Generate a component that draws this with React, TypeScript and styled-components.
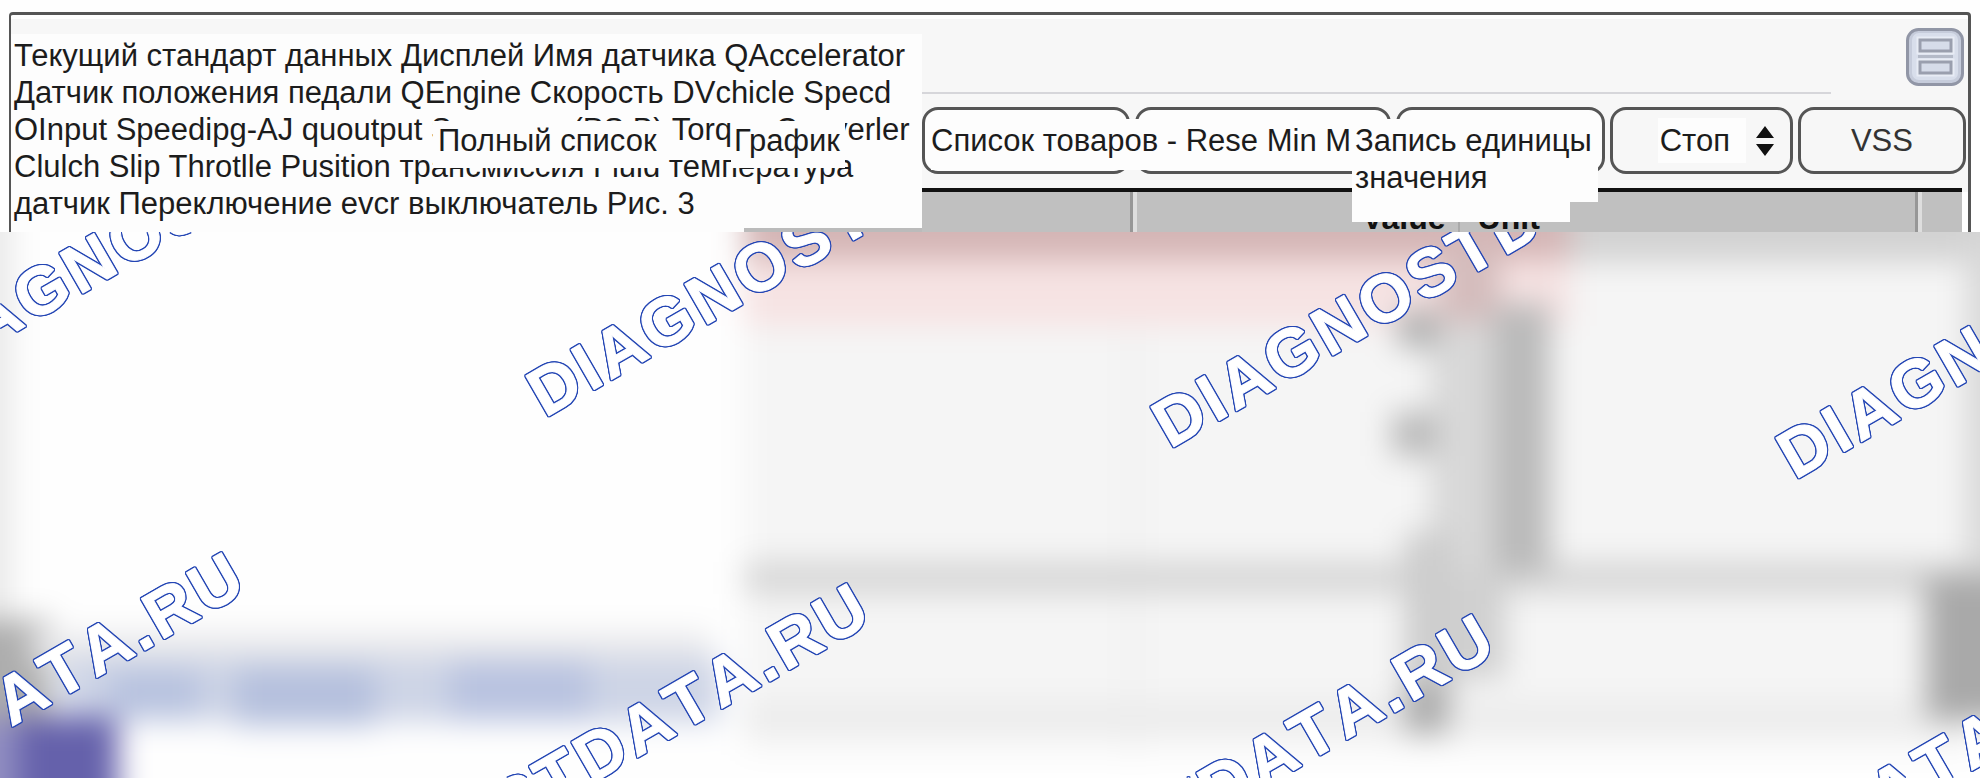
import React from "react";
import styled, { createGlobalStyle } from "styled-components";

const GlobalStyle = createGlobalStyle`
  *, *::before, *::after { box-sizing: border-box; }
  body {
    margin: 0;
    background: #fefefe;
    color: #1c1c1c;
    font-family: "Liberation Sans", Arial, sans-serif;
    font-size: 31px;
    line-height: 37px;
  }
`;

const Page = styled.main`
  display: flex;
  flex-direction: column;
  min-height: 100vh;
  overflow: hidden;
`;

const Frame = styled.section`
  display: flex;
  margin: 12px 9px 0;
  border: solid #555;
  border-width: 3px 3px 0 2px;
  border-radius: 4px 4px 0 0;
  background: #f7f7f7;
  box-shadow: inset 0 4px 0 #fff;
`;

const NoteColumn = styled.div`
  flex: none;
  width: 911px;
  padding-top: 19px;
`;

const Note = styled.div`
  position: relative;
  padding: 3px 0 6px 3px;
  background: #fdfdfd;
  white-space: nowrap;
`;

const NoteText = styled.p`
  margin: 0;
`;

const NoteFoot = styled.div`
  height: 4px;
  padding-left: 733px;
  background: #fdfdfd;
`;

const FootShade = styled.div`
  height: 100%;
  background: #bbb;
`;

const Caption = styled.span<{ $left: number; $top: number; $width: number; $height: number; $pad: string }>`
  position: absolute;
  left: ${(p) => p.$left}px;
  top: ${(p) => p.$top}px;
  width: ${(p) => p.$width}px;
  height: ${(p) => p.$height}px;
  padding: ${(p) => p.$pad};
  background: #fdfdfd;
  white-space: nowrap;
`;

const UnitCaption = styled(Caption)`
  z-index: 1;
  &::after {
    content: "";
    position: absolute;
    left: 0;
    top: 100%;
    width: 218px;
    height: 20px;
    background: #fdfdfd;
  }
`;

const Panel = styled.div`
  flex: 1;
  min-width: 0;
`;

const PanelHeader = styled.header`
  display: flex;
  justify-content: flex-end;
  padding: 13px 4px 6px 0;
`;

const MenuButton = styled.button`
  width: 58px;
  height: 58px;
  padding: 0;
  border: 0;
  background: none;
  svg { display: block; }
`;

const Divider = styled.hr`
  height: 2px;
  margin: 0 137px 13px 0;
  border: 0;
  background: #d6d6da;
`;

const Toolbar = styled.div`
  position: relative;
  display: grid;
  grid-template-columns: 208fr 256fr 208fr 183fr 168fr;
  gap: 5px;
  height: 67px;
  margin-right: 2px;
`;

const ToolButton = styled.button<{ $plain?: boolean }>`
  border: 3px solid #555;
  border-radius: 16px;
  background: ${(p) => (p.$plain ? "#f7f7f7" : "#fdfdfd")};
  color: #333;
  font: inherit;
`;

const SelectBox = styled.div`
  display: flex;
  align-items: center;
  justify-content: space-between;
  padding: 0 16px 0 45px;
  border: 3px solid #555;
  border-radius: 16px;
  background: #f7f7f7;
`;

const ModeSelect = styled.select`
  width: 88px;
  height: 45px;
  padding: 0 0 0 2px;
  border: 0;
  appearance: none;
  background: #fdfdfd;
  color: #1c1c1c;
  font: inherit;
`;

const Rule = styled.div`
  height: 4px;
  margin: 14px 6px 0 0;
  background: #111;
`;

const TableWrap = styled.div`
  padding-right: 6px;
  background: #fff;
`;

const HeadTable = styled.table`
  width: 100%;
  height: 40px;
  border-collapse: collapse;
  table-layout: fixed;
  background: #c0c0c0;
`;

const HeadCell = styled.th<{ $edge: string; $align?: string }>`
  height: 40px;
  padding: 12px 12px 0 20px;
  box-shadow: ${(p) => p.$edge};
  color: #111;
  font-size: 32px;
  line-height: 28px;
  text-align: ${(p) => p.$align ?? "left"};
  vertical-align: top;
`;

const Preview = styled.section`
  position: relative;
  flex: 1;
  min-height: 546px;
  overflow: hidden;
`;

const Backdrop = styled.svg`
  display: block;
  position: absolute;
  inset: 0;
  width: 100%;
  height: 100%;
`;

const Watermark = styled.svg`
  position: absolute;
  left: 0;
  top: 0;
  width: 100%;
  height: 100%;
  filter: drop-shadow(1px 0 0 #2446b4) drop-shadow(-1px 0 0 #2446b4) drop-shadow(0 1px 0 #2446b4)
    drop-shadow(0 -1px 0 #2446b4);
  text {
    fill: #fff;
    stroke: #fff;
    stroke-width: 1px;
    stroke-linejoin: round;
    font: bold 67px "Liberation Sans", Arial, sans-serif;
    font-kerning: none;
    letter-spacing: 4px;
  }
`;

const wide = "inset 3px 0 0 #979797, inset 7px 0 0 #dedede";
const thin = "inset 2px 0 0 #aaa";

const marks = [
  { x: -80, y: 155 },
  { x: 545, y: 186 },
  { x: 1170, y: 217 },
  { x: 1795, y: 248 },
  { x: -368, y: 714 },
  { x: 257, y: 745 },
  { x: 882, y: 776 },
  { x: 1507, y: 807 },
];

export default function App() {
  return (
    <Page>
      <GlobalStyle />
      <Frame>
        <NoteColumn>
          <Note>
            <NoteText>
              Текущий стандарт данных Дисплей Имя датчика QAccelerator
              <br />
              Датчик положения педали QEngine Скорость DVchicle Specd
              <br />
              OInput Speedipg-AJ quoutput Sensoren (PS B) Torque Converler
              <br />
              Clulch Slip Throtlle Pusition трансмиссия Fluid температура
              <br />
              датчик Переключение evcr выключатель Рис. 3
            </NoteText>
            <Caption $left={422} $top={87} $width={231} $height={47} $pad="1px 0 0 5px">
              Полный список
            </Caption>
            <Caption $left={720} $top={87} $width={114} $height={47} $pad="1px 0 0 3px">
              График
            </Caption>
          </Note>
          <NoteFoot>
            <FootShade />
          </NoteFoot>
        </NoteColumn>
        <Panel>
          <PanelHeader>
            <MenuButton aria-label="Меню">
              <svg width="58" height="58" viewBox="0 0 58 58">
                <rect x="1.5" y="1.5" width="55" height="55" rx="11" fill="#c6ccdb" stroke="#9196a6" strokeWidth="3" />
                <rect x="6" y="5" width="46" height="47" rx="7" fill="#d8deeb" />
                <g fill="#dde2ed" stroke="#e8ecf5" strokeWidth="7">
                  <rect x="14" y="12" width="31" height="11" />
                  <rect x="14" y="34" width="31" height="11" />
                </g>
                <g fill="#d6dce9" stroke="#9a9fae" strokeWidth="3">
                  <rect x="14" y="12" width="31" height="11" />
                  <rect x="14" y="34" width="31" height="11" />
                </g>
                <path d="M12 28.5H47" stroke="#b4bac8" strokeWidth="3" />
              </svg>
            </MenuButton>
          </PanelHeader>
          <Divider />
          <Toolbar>
            <ToolButton aria-label="Список товаров" />
            <ToolButton aria-label="Rese Min Max" />
            <ToolButton aria-label="Запись" />
            <SelectBox>
              <ModeSelect aria-label="Режим" defaultValue="stop">
                <option value="stop">Стоп</option>
              </ModeSelect>
              <svg width="18" height="30" viewBox="0 0 18 30" fill="#111">
                <path d="M9 0 18 12H0ZM9 30 0 18H18Z" />
              </svg>
            </SelectBox>
            <ToolButton $plain>VSS</ToolButton>
            <Caption $left={9} $top={12} $width={421} $height={51} $pad="3px 0 0">
              Список товаров - Rese Min M
            </Caption>
            <UnitCaption $left={430} $top={12} $width={246} $height={83} $pad="3px 0 0 3px">
              Запись единицы
              <br />
              значения
            </UnitCaption>
          </Toolbar>
          <Rule />
          <TableWrap>
            <HeadTable>
              <colgroup>
                <col style={{ width: "20%" }} />
                <col style={{ width: "31.5%" }} />
                <col style={{ width: "44%" }} />
                <col />
              </colgroup>
              <thead>
                <tr>
                  <HeadCell $edge="none" />
                  <HeadCell $edge={wide} $align="right">Value</HeadCell>
                  <HeadCell $edge={thin}>Unit</HeadCell>
                  <HeadCell $edge={wide} />
                </tr>
              </thead>
            </HeadTable>
          </TableWrap>
        </Panel>
      </Frame>
      <Preview>
        <Backdrop viewBox="0 0 1980 546" preserveAspectRatio="none" aria-hidden="true">
          <defs>
            <filter id="soft" filterUnits="userSpaceOnUse" x="-80" y="-80" width="2140" height="706" colorInterpolationFilters="sRGB">
              <feGaussianBlur stdDeviation="15" />
            </filter>
          </defs>
          <g filter="url(#soft)">
            <rect x="-80" y="-80" width="2140" height="706" fill="#fefefe" />
            <rect x="-80" y="-80" width="92" height="500" fill="#e9e9e9" />
            <rect x="744" y="-80" width="1236" height="598" fill="#f5f5f5" />
            <rect x="744" y="-80" width="1320" height="110" fill="#d2d2d2" />
            <rect x="744" y="-80" width="826" height="174" fill="#f6e3e3" />
            <rect x="744" y="-80" width="826" height="108" fill="#d4b5b5" />
            <rect x="1128" y="100" width="10" height="420" fill="#ededed" />
            <rect x="1966" y="0" width="100" height="330" fill="#d8d8d8" />
            <rect x="744" y="330" width="1320" height="32" fill="#d6d6d6" />
            <rect x="744" y="470" width="1220" height="30" fill="#ebebeb" />
            <rect x="1440" y="10" width="60" height="80" fill="#d4bcbc" />
            <rect x="1430" y="90" width="70" height="300" fill="#d8d8d8" />
            <rect x="1398" y="78" width="40" height="38" fill="#b0b0b0" />
            <rect x="1392" y="180" width="44" height="44" fill="#bababa" />
            <rect x="1494" y="72" width="56" height="268" fill="#bababa" />
            <rect x="1404" y="300" width="50" height="170" fill="#cdcdcd" />
            <rect x="1450" y="340" width="56" height="106" fill="#d0d0d0" />
            <rect x="1404" y="452" width="44" height="50" fill="#acacac" />
            <rect x="1926" y="344" width="140" height="144" fill="#a9a9a9" />
            <rect x="-80" y="388" width="130" height="110" fill="#adadad" />
            <rect x="30" y="400" width="680" height="30" fill="#eaeaec" />
            <rect x="60" y="426" width="660" height="64" fill="#cdd4e6" />
            <rect x="110" y="438" width="90" height="46" fill="#b7c2df" />
            <rect x="235" y="436" width="140" height="58" fill="#b5c0dd" />
            <rect x="450" y="428" width="140" height="60" fill="#b9c3e0" />
            <rect x="-80" y="485" width="98" height="150" fill="#928fc2" />
            <rect x="18" y="485" width="100" height="150" fill="#6561ab" />
          </g>
        </Backdrop>
        <Watermark aria-hidden="true">
          {marks.map((m) => (
            <text key={`${m.x} ${m.y}`} transform={`translate(${m.x} ${m.y}) rotate(-30)`}>
              DIAGNOSTDATA.RU
            </text>
          ))}
        </Watermark>
      </Preview>
    </Page>
  );
}
